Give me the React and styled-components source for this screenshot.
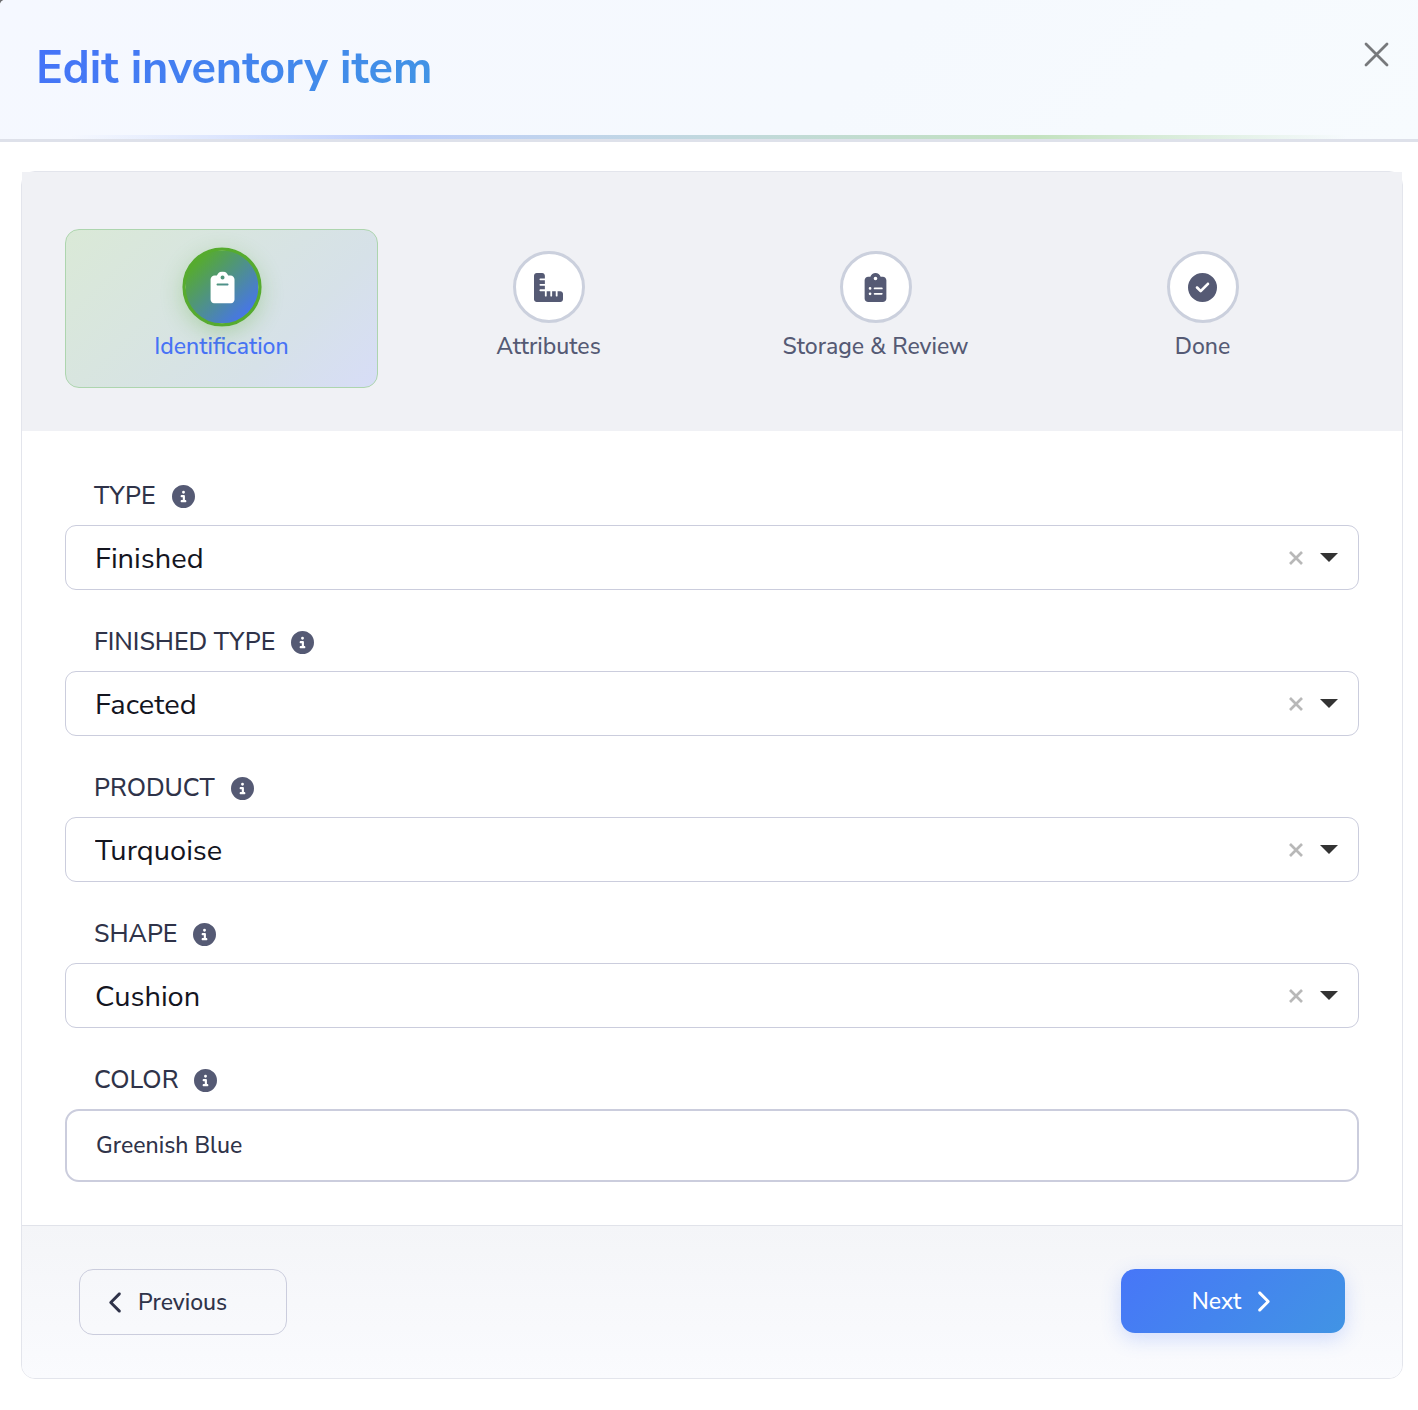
import { useState } from "react";
import styled, { createGlobalStyle } from "styled-components";
import {
  FaChevronLeft,
  FaChevronRight,
  FaCircleCheck,
  FaCircleInfo,
  FaClipboard,
  FaClipboardList,
  FaRulerCombined,
} from "react-icons/fa6";

const GlobalStyle = createGlobalStyle`
  * {
    box-sizing: border-box;
  }

  body {
    margin: 0;
    background: #6c6d70;
    font-family: "Nunito Sans", Nunito, Lato, "Open Sans", sans-serif;
    color: #2f3349;
  }

  button, input, select {
    font-family: inherit;
  }
`;

const Modal = styled.div`
  min-height: 100vh;
  background: #fff;
  border-top-left-radius: 5px;
  overflow: hidden;
`;

const ModalHeader = styled.header`
  position: relative;
  display: flex;
  justify-content: space-between;
  align-items: flex-start;
  height: 142px;
  padding: 36px 24px 0 36px;
  background: linear-gradient(135deg, #f5f8ff 0%, #f5f9fe 60%, #f7fbfe 100%);
  border-bottom: 3px solid #dee1ea;

  &::after {
    content: "";
    position: absolute;
    left: 0;
    right: 0;
    bottom: 0;
    height: 4px;
    background: linear-gradient(
      90deg,
      transparent 5%,
      #bfcffc 28%,
      #c3e2bf 73%,
      transparent 95%
    );
  }
`;

const Title = styled.h1`
  margin: 0;
  font-size: 45px;
  line-height: 66px;
  font-weight: 700;
  background: linear-gradient(135deg, #4571f9 0%, #4196e4 100%);
  background-clip: text;
  -webkit-background-clip: text;
  color: transparent;
`;

const CloseButton = styled.button`
  display: flex;
  padding: 4px;
  border: none;
  background: none;
  color: #77797c;
  cursor: pointer;
`;

const ModalBody = styled.main`
  padding: 29px 15px 31px 21px;
`;

const Wizard = styled.form`
  border: 1px solid #e3e5ec;
  border-radius: 14px;
`;

const Steps = styled.nav`
  display: grid;
  grid-template-columns: repeat(4, 1fr);
  gap: 14px;
  padding: 57px 43px 43px;
  background: #f0f1f5;
`;

const Step = styled.button`
  display: flex;
  flex-direction: column;
  align-items: center;
  gap: 8px;
  padding: 21px 14px 24px;
  border: 1px solid ${(props) => (props.$active ? "#add5ae" : "transparent")};
  border-radius: 14px;
  background: ${(props) =>
    props.$active
      ? "linear-gradient(135deg, #dae9d7 0%, #d6e1e8 70%, #d7ddf7 100%)"
      : "none"};
  color: ${(props) => (props.$active ? "#4772f5" : "#555a74")};
  font-size: 23px;
  line-height: 32px;
  font-weight: 500;
  cursor: pointer;
`;

const StepIcon = styled.span`
  display: flex;
  align-items: center;
  justify-content: center;
  width: 72px;
  height: 72px;
  border: 3px solid ${(props) => (props.$active ? "#56ab2f" : "#cbd0dd")};
  border-radius: 50%;
  background: ${(props) =>
    props.$active
      ? "linear-gradient(135deg, #56ab2f 15%, #4776e6 85%)"
      : "#fff"};
  color: ${(props) => (props.$active ? "#fff" : "#555a74")};
  font-size: 29px;
  box-shadow: ${(props) =>
    props.$active ? "0 6px 20px rgba(86, 171, 47, 0.3)" : "none"};
  transform: ${(props) => (props.$active ? "scale(1.1)" : "none")};
`;

const Fields = styled.div`
  display: flex;
  flex-direction: column;
  gap: 30px;
  padding: 43px;
`;

const Field = styled.div`
  display: flex;
  flex-direction: column;
  gap: 7px;
`;

const LabelRow = styled.div`
  display: flex;
  align-items: center;
  gap: 16px;
  padding-left: 29px;
  color: #555a74;
  font-size: 23px;
`;

const Label = styled.label`
  color: #2f3349;
  font-size: 25px;
  line-height: 44px;
  font-weight: 500;
  text-transform: uppercase;
`;

const SelectWrap = styled.div`
  position: relative;
`;

const Select = styled.select`
  appearance: none;
  display: block;
  width: 100%;
  height: 65px;
  padding: 2px 90px 0 29px;
  border: 1px solid #cbcddd;
  border-radius: 11px;
  background: #fff;
  color: #14151f;
  font-size: 29px;
`;

const SelectIcons = styled.div`
  position: absolute;
  top: 0;
  right: 21px;
  bottom: 0;
  display: flex;
  align-items: center;
  gap: 16px;
  pointer-events: none;
`;

const ClearButton = styled.button`
  display: flex;
  padding: 0;
  border: none;
  background: none;
  color: #b8b8b8;
  cursor: pointer;
  pointer-events: auto;
`;

const TextInput = styled.input`
  width: 100%;
  height: 73px;
  padding: 0 29px;
  border: 2px solid #cbcddd;
  border-radius: 14px;
  background: #fff;
  color: #2f3349;
  font-size: 23px;
  font-weight: 500;
`;

const WizardFooter = styled.footer`
  display: flex;
  justify-content: space-between;
  align-items: flex-start;
  padding: 43px 57px;
  border-top: 1px solid #e1e3ea;
  border-radius: 0 0 13px 13px;
  background: linear-gradient(180deg, #f4f5f8 0%, #fafbfe 100%);
`;

const PreviousButton = styled.button`
  display: flex;
  align-items: center;
  gap: 10px;
  width: 208px;
  height: 66px;
  padding: 0 25px;
  border: 1px solid #cbcddd;
  border-radius: 14px;
  background: transparent;
  color: #2f3349;
  font-size: 23px;
  font-weight: 500;
  cursor: pointer;
`;

const NextButton = styled(PreviousButton)`
  justify-content: center;
  width: 224px;
  height: 64px;
  border: none;
  background: linear-gradient(135deg, #4776f8 0%, #4194e4 100%);
  color: #fff;
  box-shadow: 0 6px 20px rgba(71, 118, 250, 0.22);
`;

const steps = [
  { name: "Identification", Icon: FaClipboard },
  { name: "Attributes", Icon: FaRulerCombined },
  { name: "Storage & Review", Icon: FaClipboardList },
  { name: "Done", Icon: FaCircleCheck },
];

const selects = [
  { id: "type", label: "Type", options: ["Finished"] },
  { id: "finishedType", label: "Finished type", options: ["Faceted"] },
  { id: "product", label: "Product", options: ["Turquoise"] },
  { id: "shape", label: "Shape", options: ["Cushion"] },
];

function SelectField({ id, label, options }) {
  const [value, setValue] = useState(options[0]);

  return (
    <Field>
      <LabelRow>
        <Label htmlFor={id}>{label}</Label>
        <FaCircleInfo />
      </LabelRow>
      <SelectWrap>
        <Select id={id} value={value} onChange={(e) => setValue(e.target.value)}>
          <option value="" hidden></option>
          {options.map((option) => (
            <option key={option}>{option}</option>
          ))}
        </Select>
        <SelectIcons>
          <ClearButton type="button" aria-label="Clear" onClick={() => setValue("")}>
            <svg width="16" height="16" viewBox="0 0 16 16">
              <path
                d="M2 2l12 12M14 2L2 14"
                stroke="currentColor"
                strokeWidth="2.7"
              />
            </svg>
          </ClearButton>
          <svg width="18" height="9" viewBox="0 0 18 9">
            <path d="M0 0h18L9 9z" fill="#333" />
          </svg>
        </SelectIcons>
      </SelectWrap>
    </Field>
  );
}

export default function App() {
  const [active, setActive] = useState(0);
  const [color, setColor] = useState("Greenish Blue");

  const move = (by) =>
    setActive(Math.min(steps.length - 1, Math.max(0, active + by)));

  return (
    <Modal>
      <GlobalStyle />
      <ModalHeader>
        <Title>Edit inventory item</Title>
        <CloseButton type="button" aria-label="Close">
          <svg width="28" height="28" viewBox="0 0 28 28">
            <path
              d="M4 4l21 21M25 4L4 25"
              stroke="currentColor"
              strokeWidth="2.8"
              strokeLinecap="round"
            />
          </svg>
        </CloseButton>
      </ModalHeader>

      <ModalBody>
        <Wizard onSubmit={(e) => e.preventDefault()}>
          <Steps>
            {steps.map(({ name, Icon }, i) => (
              <Step
                key={name}
                type="button"
                $active={i === active}
                onClick={() => setActive(i)}
              >
                <StepIcon $active={i === active}>
                  <Icon />
                </StepIcon>
                {name}
              </Step>
            ))}
          </Steps>

          <Fields>
            {selects.map((field) => (
              <SelectField key={field.id} {...field} />
            ))}
            <Field>
              <LabelRow>
                <Label htmlFor="color">Color</Label>
                <FaCircleInfo />
              </LabelRow>
              <TextInput
                id="color"
                type="text"
                value={color}
                onChange={(e) => setColor(e.target.value)}
              />
            </Field>
          </Fields>

          <WizardFooter>
            <PreviousButton type="button" onClick={() => move(-1)}>
              <FaChevronLeft />
              Previous
            </PreviousButton>
            <NextButton type="button" onClick={() => move(1)}>
              Next
              <FaChevronRight />
            </NextButton>
          </WizardFooter>
        </Wizard>
      </ModalBody>
    </Modal>
  );
}
